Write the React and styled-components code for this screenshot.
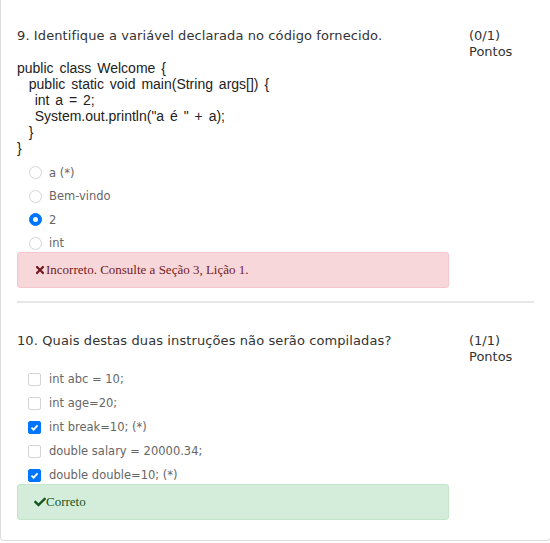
import styled, { createGlobalStyle } from "styled-components";
import { FaTimes, FaCheck } from "react-icons/fa";

const GlobalStyle = createGlobalStyle`
  html, body {
    margin: 0;
    padding: 0;
    overflow: hidden;
    background: #ffffff;
  }
`;

const questions = [
  {
    number: 9,
    title: "Identifique a variável declarada no código fornecido.",
    score: "(0/1)",
    code: [
      "public class Welcome {",
      "  public static void main(String args[]) {",
      "   int a = 2;",
      '   System.out.println("a é " + a);',
      "  }",
      "}",
    ],
    type: "radio",
    options: [
      { label: "a (*)", checked: false },
      { label: "Bem-vindo", checked: false },
      { label: "2", checked: true },
      { label: "int", checked: false },
    ],
    correct: false,
    feedback: "Incorreto. Consulte a Seção 3, Lição 1.",
  },
  {
    number: 10,
    title: "Quais destas duas instruções não serão compiladas?",
    score: "(1/1)",
    code: null,
    type: "checkbox",
    options: [
      { label: "int abc = 10;", checked: false },
      { label: "int age=20;", checked: false },
      { label: "int break=10; (*)", checked: true },
      { label: "double salary = 20000.34;", checked: false },
      { label: "double double=10; (*)", checked: true },
    ],
    correct: true,
    feedback: "Correto",
  },
];

export default function App() {
  return (
    <>
      <GlobalStyle />
      <Card>
        {questions.map((q, i) => (
          <Question key={q.number} $first={i === 0}>
            <QuestionRow>
              <Prompt>
                <Title>
                  {q.number}. {q.title}
                </Title>
              </Prompt>
              <Score>
                {q.score}
                <br />
                Pontos
              </Score>
            </QuestionRow>
            {q.code && (
              <Code>
                {q.code.map((line, j) => (
                  <CodeLine key={j}>{line}</CodeLine>
                ))}
              </Code>
            )}
            <Options $type={q.type}>
              {q.options.map((o) => (
                <Option key={o.label} $type={q.type}>
                  {q.type === "radio" ? (
                    <Radio $checked={o.checked} />
                  ) : (
                    <Checkbox $checked={o.checked}>
                      {o.checked && (
                        <svg width="9" height="9" viewBox="0 0 10 10">
                          <path
                            d="M1.6 5.2 L4 7.4 L8.4 2.6"
                            fill="none"
                            stroke="#fff"
                            strokeWidth="2"
                          />
                        </svg>
                      )}
                    </Checkbox>
                  )}
                  <OptionLabel>{o.label}</OptionLabel>
                </Option>
              ))}
            </Options>
            <Alert $correct={q.correct}>
              <AlertIcon>{q.correct ? <FaCheck /> : <FaTimes />}</AlertIcon>
              {q.feedback}
            </Alert>
            {i < questions.length - 1 && <Divider />}
          </Question>
        ))}
      </Card>
    </>
  );
}

const Card = styled.div`
  width: 517px;
  padding: 0 16px 20px 16px;
  border: 1px solid #dddddd;
  border-top: none;
  border-radius: 0 0 4px 4px;
  background: #ffffff;
`;

const Question = styled.div`
  padding-top: ${(p) => (p.$first ? "28px" : "30px")};
`;

const QuestionRow = styled.div`
  display: flex;
  align-items: flex-start;
`;

const Prompt = styled.div`
  width: 452px;
`;

const Title = styled.div`
  font-family: "DejaVu Sans", Verdana, sans-serif;
  font-size: 13px;
  letter-spacing: 0.1px;
  line-height: 16px;
  color: #333333;
`;

const Score = styled.div`
  font-family: "DejaVu Sans", Verdana, sans-serif;
  font-size: 13px;
  line-height: 16px;
  color: #333333;
`;

const Code = styled.div`
  font-family: "Liberation Sans", Arial, sans-serif;
  font-size: 14px;
  word-spacing: 2px;
  line-height: 16px;
  color: #222222;
`;

const CodeLine = styled.div`
  white-space: pre;
`;

const Options = styled.div`
  display: flex;
  flex-direction: column;
  padding-left: 11px;
  margin-top: ${(p) => (p.$type === "radio" ? "5px" : "2px")};
`;

const Option = styled.div`
  display: flex;
  align-items: center;
  height: ${(p) => (p.$type === "radio" ? "23.5px" : "24px")};
  gap: 7px;
`;

const Radio = styled.span`
  box-sizing: border-box;
  width: 13px;
  height: 13px;
  margin-left: 1px;
  border-radius: 50%;
  background: ${(p) => (p.$checked ? "#0075ff" : "#ffffff")};
  border: 1px solid ${(p) => (p.$checked ? "#0075ff" : "#d4d4d4")};
  display: flex;
  align-items: center;
  justify-content: center;

  &::after {
    content: "";
    display: ${(p) => (p.$checked ? "block" : "none")};
    width: 5px;
    height: 5px;
    border-radius: 50%;
    background: #ffffff;
  }
`;

const Checkbox = styled.span`
  box-sizing: border-box;
  width: 13px;
  height: 13px;
  border-radius: 2px;
  background: ${(p) => (p.$checked ? "#0075ff" : "#ffffff")};
  border: 1px solid ${(p) => (p.$checked ? "#0075ff" : "#d4d4d4")};
  display: flex;
  align-items: center;
  justify-content: center;
  margin-right: 1px;
`;

const OptionLabel = styled.span`
  font-family: "DejaVu Sans", Verdana, sans-serif;
  font-size: 11.5px;
  color: #666666;
`;

const Alert = styled.div`
  box-sizing: border-box;
  width: 432px;
  height: 36px;
  margin-top: -3px;
  padding: 0 15px 0 16px;
  display: flex;
  align-items: center;
  border-radius: 3px;
  font-family: "Liberation Serif", "Times New Roman", serif;
  font-size: 13px;
  background: ${(p) => (p.$correct ? "#d4edda" : "#f8d7da")};
  border: 1px solid ${(p) => (p.$correct ? "#c3e6cb" : "#f5c6cb")};
  color: ${(p) => (p.$correct ? "#155724" : "#721c24")};
`;

const AlertIcon = styled.span`
  display: inline-flex;
  align-items: center;
  font-size: 12px;
  margin-right: 0;
`;

const Divider = styled.div`
  height: 2px;
  margin-top: 13px;
  background: #e6e6e6;
`;
